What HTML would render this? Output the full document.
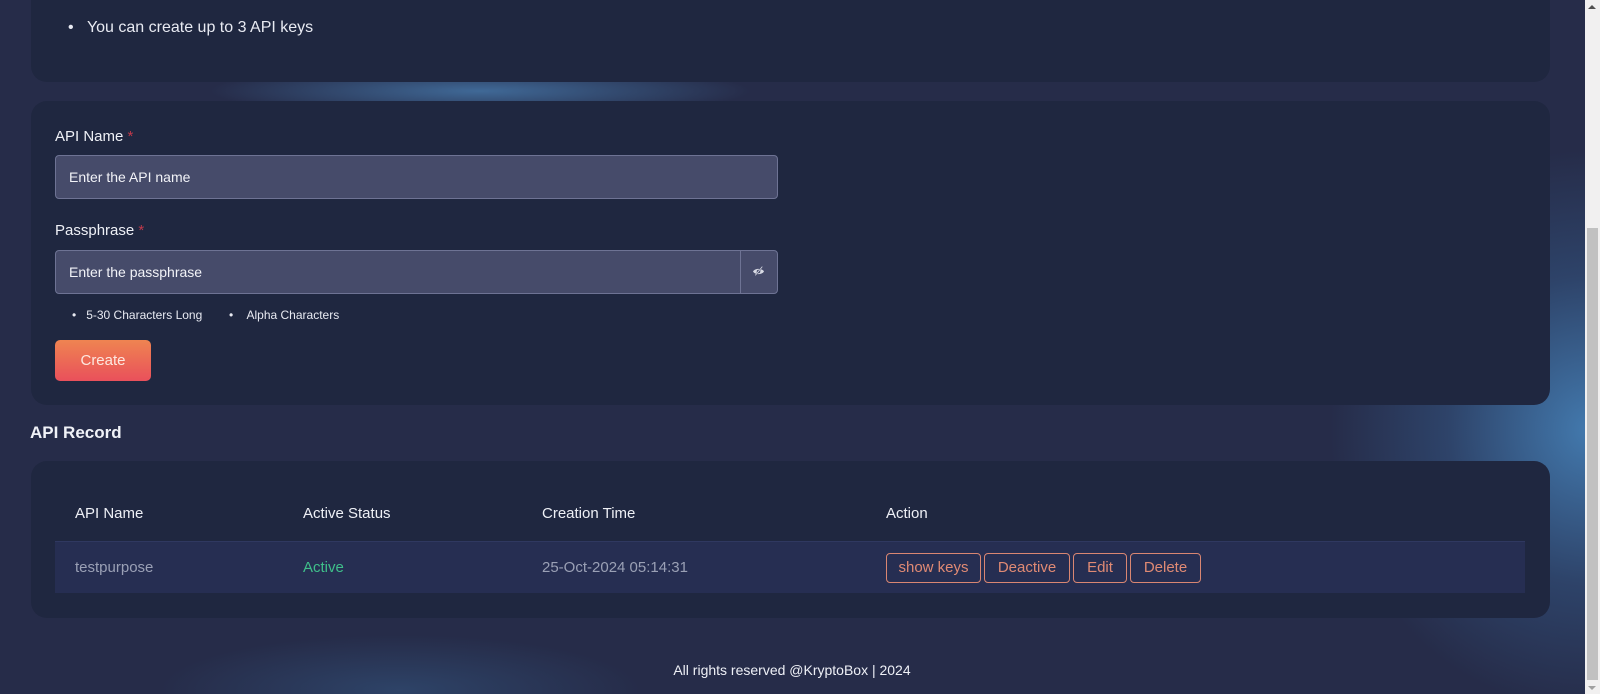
<!DOCTYPE html>
<html><head><style>
*{margin:0;padding:0;box-sizing:border-box}
body{width:1600px;height:694px;overflow:hidden;font-family:"Liberation Sans",sans-serif;color:#e8eaf2;position:relative;
background:
radial-gradient(ellipse 260px 280px at 1590px 430px,rgba(70,130,185,.9),rgba(60,110,165,.35) 55%,rgba(70,130,185,0) 100%),
radial-gradient(ellipse 270px 26px at 480px 91px,rgba(70,120,170,.8),rgba(70,120,170,0) 100%),
radial-gradient(ellipse 240px 55px at 400px 690px,rgba(55,95,140,.45),rgba(55,95,140,0) 100%),
#262c49;}
.card{position:absolute;left:31px;width:1519px;background:#1f2740;border-radius:16px}
.abs{position:absolute}
.lbl{font-size:15px;color:#eef0f6}
.lbl span{color:#c0394a}
.inp{position:absolute;left:55px;width:723px;height:44px;background:#464b6a;border:1px solid #6e7394;border-radius:4px;font-size:14px;color:#f2f3f8;padding:13px 0 0 13px}
.btn{position:absolute;top:553px;height:30px;border:1px solid #d98672;border-radius:4px;color:#e08a74;font-size:15px;text-align:center;line-height:28px}
.th{position:absolute;top:505px;font-size:15px;color:#eef0f6}
.td{position:absolute;top:559px;font-size:15px;color:#9aa0b5}
</style></head><body>
<div class="card" style="top:-20px;height:102px"></div>
<div class="abs" style="left:68px;top:19px;font-size:16px">•&nbsp;&nbsp;&nbsp;You can create up to 3 API keys</div>

<div class="card" style="top:101px;height:304px"></div>
<div class="abs lbl" style="left:55px;top:128px">API Name <span>*</span></div>
<div class="inp" style="top:155px">Enter the API name</div>
<div class="abs lbl" style="left:55px;top:222px">Passphrase <span>*</span></div>
<div class="inp" style="top:250px">Enter the passphrase</div>
<div class="abs" style="left:740px;top:250px;width:1px;height:44px;background:#6e7394"></div>
<svg class="abs" style="left:752px;top:266px" width="13" height="11" viewBox="0 0 13 11"><path d="M1 5.5C3 2 10 2 12 5.5C10 9 3 9 1 5.5Z" fill="#d8dae4"/><circle cx="6.5" cy="5.5" r="1.8" fill="#464b6a"/><path d="M3 10L10 1" stroke="#464b6a" stroke-width="1.6"/><path d="M3.3 9.4L10.3 0.6" stroke="#d8dae4" stroke-width=".8"/></svg>
<div class="abs" style="left:72px;top:308px;font-size:12px;color:#e8eaf2">•&nbsp;&nbsp;&nbsp;5-30 Characters Long&nbsp;&nbsp;&nbsp;&nbsp;&nbsp;&nbsp;&nbsp;&nbsp;•&nbsp;&nbsp;&nbsp;&nbsp;Alpha Characters</div>
<div class="abs" style="left:55px;top:340px;width:96px;height:41px;border-radius:5px;background:linear-gradient(#ef8451,#e9505b);font-size:15px;color:#fde8e0;text-align:center;line-height:41px">Create</div>

<div class="abs" style="left:30px;top:423px;font-size:17px;font-weight:bold;color:#f0f2f8">API Record</div>
<div class="card" style="top:461px;height:157px"></div>
<div class="th" style="left:75px">API Name</div>
<div class="th" style="left:303px">Active Status</div>
<div class="th" style="left:542px">Creation Time</div>
<div class="th" style="left:886px">Action</div>
<div class="abs" style="left:55px;top:541px;width:1470px;height:52px;background:#262e52;border-top:1px solid #2f3860"></div>
<div class="td" style="left:75px">testpurpose</div>
<div class="td" style="left:303px;color:#3fbf8a">Active</div>
<div class="td" style="left:542px">25-Oct-2024 05:14:31</div>
<div class="btn" style="left:886px;width:95px">show keys</div>
<div class="btn" style="left:984px;width:86px">Deactive</div>
<div class="btn" style="left:1073px;width:54px">Edit</div>
<div class="btn" style="left:1130px;width:71px">Delete</div>

<div class="abs" style="left:0;width:1584px;top:662px;text-align:center;font-size:14px;color:#eef0f6">All rights reserved @KryptoBox | 2024</div>

<div class="abs" style="left:1585px;top:0;width:15px;height:694px;background:#f1f0f0"></div>
<div class="abs" style="left:1587px;top:228px;width:11px;height:452px;background:#c1c1c1"></div>
<div class="abs" style="left:1588px;top:5px;width:0;height:0;border-left:4px solid transparent;border-right:4px solid transparent;border-bottom:4px solid #505050"></div>
<div class="abs" style="left:1588px;top:686px;width:0;height:0;border-left:4px solid transparent;border-right:4px solid transparent;border-top:4px solid #a0a0a0"></div>
</body></html>
